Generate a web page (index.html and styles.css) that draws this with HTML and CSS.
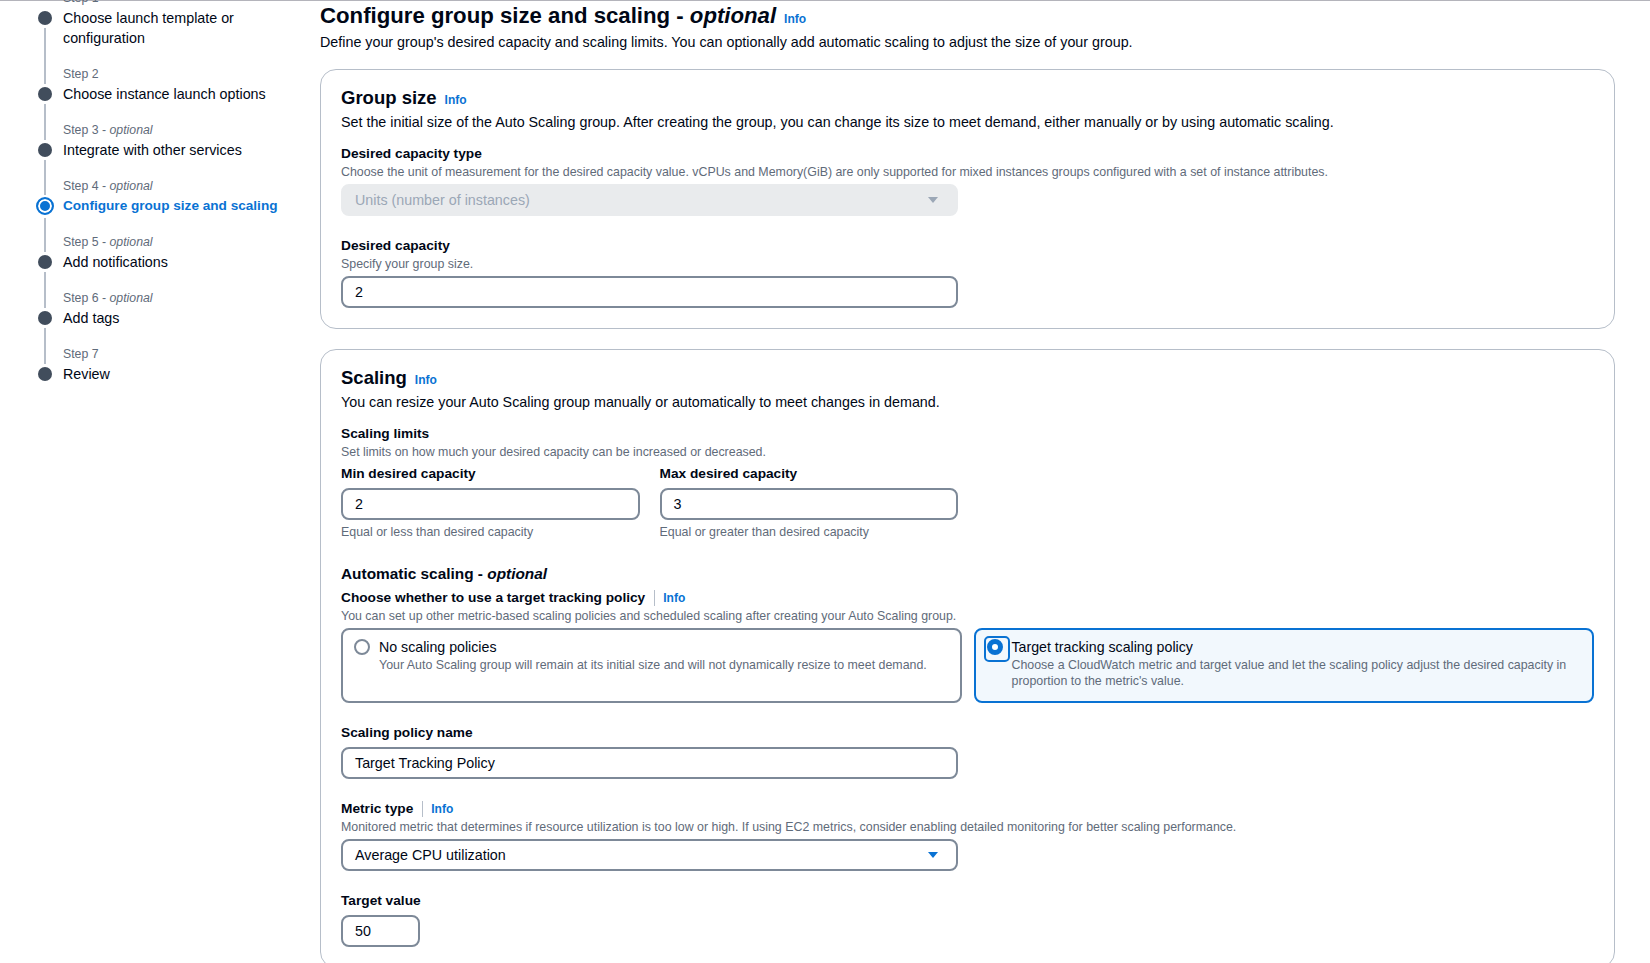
FILE: index.html
```html
<!DOCTYPE html>
<html lang="en">
<head>
<meta charset="utf-8">
<title>Configure group size and scaling</title>
<link rel="stylesheet" href="styles.css">
</head>
<body>
<div class="page">
  <nav class="wizard-nav">
    <ol class="steps">
      <li class="step first">
        <div class="rail"><span class="line top"></span><span class="dot"></span><span class="line bottom"></span></div>
        <div class="step-text"><span class="step-label">Step 1</span><span class="step-title">Choose launch template or configuration</span></div>
      </li>
      <li class="step">
        <div class="rail"><span class="line top"></span><span class="dot"></span><span class="line bottom"></span></div>
        <div class="step-text"><span class="step-label">Step 2</span><span class="step-title">Choose instance launch options</span></div>
      </li>
      <li class="step">
        <div class="rail"><span class="line top"></span><span class="dot"></span><span class="line bottom"></span></div>
        <div class="step-text"><span class="step-label">Step 3 - <i>optional</i></span><span class="step-title">Integrate with other services</span></div>
      </li>
      <li class="step active">
        <div class="rail"><span class="line top"></span><span class="dot"></span><span class="line bottom"></span></div>
        <div class="step-text"><span class="step-label">Step 4 - <i>optional</i></span><span class="step-title">Configure group size and scaling</span></div>
      </li>
      <li class="step">
        <div class="rail"><span class="line top"></span><span class="dot"></span><span class="line bottom"></span></div>
        <div class="step-text"><span class="step-label">Step 5 - <i>optional</i></span><span class="step-title">Add notifications</span></div>
      </li>
      <li class="step">
        <div class="rail"><span class="line top"></span><span class="dot"></span><span class="line bottom"></span></div>
        <div class="step-text"><span class="step-label">Step 6 - <i>optional</i></span><span class="step-title">Add tags</span></div>
      </li>
      <li class="step last">
        <div class="rail"><span class="line top"></span><span class="dot"></span><span class="line bottom"></span></div>
        <div class="step-text"><span class="step-label">Step 7</span><span class="step-title">Review</span></div>
      </li>
    </ol>
  </nav>

  <main class="content">
    <header class="page-header">
      <h1 class="page-title">Configure group size and scaling - <i>optional</i><a class="info-link">Info</a></h1>
      <p class="page-desc">Define your group's desired capacity and scaling limits. You can optionally add automatic scaling to adjust the size of your group.</p>
    </header>

    <section class="card">
      <h2 class="card-title">Group size<a class="info-link">Info</a></h2>
      <p class="card-desc">Set the initial size of the Auto Scaling group. After creating the group, you can change its size to meet demand, either manually or by using automatic scaling.</p>

      <div class="field first-field">
        <div class="field-label">Desired capacity type</div>
        <div class="field-desc">Choose the unit of measurement for the desired capacity value. vCPUs and Memory(GiB) are only supported for mixed instances groups configured with a set of instance attributes.</div>
        <div class="control select disabled">
          <span class="value">Units (number of instances)</span>
          <svg class="caret" width="16" height="16" viewBox="0 0 16 16"><path d="M3 5h10l-5 6z" fill="#9ba7b6"/></svg>
        </div>
      </div>

      <div class="field">
        <div class="field-label">Desired capacity</div>
        <div class="field-desc">Specify your group size.</div>
        <div class="control input"><span class="value">2</span></div>
      </div>
    </section>

    <section class="card">
      <h2 class="card-title">Scaling<a class="info-link">Info</a></h2>
      <p class="card-desc">You can resize your Auto Scaling group manually or automatically to meet changes in demand.</p>

      <div class="field first-field">
        <div class="field-label">Scaling limits</div>
        <div class="field-desc">Set limits on how much your desired capacity can be increased or decreased.</div>
        <div class="limits">
          <div class="limit">
            <div class="field-label">Min desired capacity</div>
            <div class="control input"><span class="value">2</span></div>
            <div class="field-help">Equal or less than desired capacity</div>
          </div>
          <div class="limit">
            <div class="field-label">Max desired capacity</div>
            <div class="control input"><span class="value">3</span></div>
            <div class="field-help">Equal or greater than desired capacity</div>
          </div>
        </div>
      </div>

      <div class="auto-scaling">
        <h3 class="section-title">Automatic scaling - <i>optional</i></h3>
        <div class="field-label label-row">Choose whether to use a target tracking policy<span class="sep"></span><a class="info-link plain">Info</a></div>
        <div class="field-desc">You can set up other metric-based scaling policies and scheduled scaling after creating your Auto Scaling group.</div>
        <div class="tiles">
          <div class="tile">
            <span class="radio"></span>
            <div class="tile-text">
              <div class="tile-title">No scaling policies</div>
              <div class="tile-desc">Your Auto Scaling group will remain at its initial size and will not dynamically resize to meet demand.</div>
            </div>
          </div>
          <div class="tile selected">
            <span class="radio checked"></span>
            <div class="tile-text">
              <div class="tile-title">Target tracking scaling policy</div>
              <div class="tile-desc">Choose a CloudWatch metric and target value and let the scaling policy adjust the desired capacity in proportion to the metric's value.</div>
            </div>
          </div>
        </div>
      </div>

      <div class="field">
        <div class="field-label">Scaling policy name</div>
        <div class="control input"><span class="value">Target Tracking Policy</span></div>
      </div>

      <div class="field">
        <div class="field-label label-row">Metric type<span class="sep"></span><a class="info-link plain">Info</a></div>
        <div class="field-desc">Monitored metric that determines if resource utilization is too low or high. If using EC2 metrics, consider enabling detailed monitoring for better scaling performance.</div>
        <div class="control select">
          <span class="value">Average CPU utilization</span>
          <svg class="caret" width="16" height="16" viewBox="0 0 16 16"><path d="M3 5h10l-5 6z" fill="#0972d3"/></svg>
        </div>
      </div>

      <div class="field">
        <div class="field-label">Target value</div>
        <div class="control input small"><span class="value">50</span></div>
      </div>
    </section>
  </main>
</div>
</body>
</html>
```

FILE: styles.css
```css
* {
  box-sizing: border-box;
}

html, body {
  margin: 0;
  padding: 0;
  background: #ffffff;
}

body {
  font-family: "Liberation Sans", Arial, sans-serif;
  font-size: 14.3px;
  line-height: 20px;
  color: #000716;
  overflow: hidden;
}

.page {
  display: flex;
  border-top: 1px solid #b4b4bb;
  min-height: 100vh;
}

/* ---------- wizard navigation ---------- */
.wizard-nav {
  width: 320px;
  flex: none;
  padding: 0 24px 0 37px;
}

.steps {
  list-style: none;
  margin: -13px 0 0;
  padding: 0;
}

.step {
  display: grid;
  grid-template-columns: 16px 1fr;
  column-gap: 10px;
}

.rail {
  display: flex;
  flex-direction: column;
  align-items: center;
}

.rail .line {
  width: 2px;
  background: #b6bec9;
}

.rail .line.top {
  height: 20px;
  flex: none;
}

.rail .line.bottom {
  flex: 1;
}

.rail .dot {
  flex: none;
  width: 14px;
  height: 14px;
  margin: 3px 0;
  border-radius: 50%;
  background: #414d5c;
}

.step.active .rail .line.top {
  height: 19px;
}

.step.active .rail .dot {
  width: 18px;
  height: 18px;
  margin: 2px 0 3px;
  border: 2px solid #0972d3;
  background: #0972d3;
  box-shadow: inset 0 0 0 2px #ffffff;
}

.step.first .rail .line.top,
.step.last .rail .line.bottom {
  visibility: hidden;
}

.step-text {
  display: flex;
  flex-direction: column;
  padding-bottom: 16px;
}

.step-label {
  font-size: 12.3px;
  line-height: 20px;
  color: #5f6b7a;
}

.step-title {
  font-size: 14.3px;
  line-height: 20px;
  color: #000716;
}

.step.active .step-title {
  color: #0972d3;
  font-weight: 700;
  font-size: 13.6px;
}

/* ---------- content ---------- */
.content {
  flex: 1;
  min-width: 0;
  padding-right: 35px;
}

.page-title {
  margin: 0;
  font-size: 22.2px;
  line-height: 30px;
  font-weight: 700;
  color: #000716;
}

.info-link {
  margin-left: 8px;
  font-size: 12px;
  line-height: 16px;
  font-weight: 700;
  color: #0972d3;
}

.info-link.plain {
  margin-left: 0;
}

.page-desc {
  margin: 1px 0 0;
  color: #000716;
}

.card {
  margin-top: 17px;
  border: 1px solid #b6bec9;
  border-radius: 16px;
  padding: 16px 20px 20px;
}

.card + .card {
  margin-top: 20px;
}

.card-title {
  margin: 0;
  font-size: 18.5px;
  line-height: 24px;
  font-weight: 700;
}

.card-desc {
  margin: 2px 0 0;
  color: #000716;
}

.field {
  margin-top: 20px;
}

.field.first-field {
  margin-top: 12px;
}

.field-label {
  font-weight: 700;
  font-size: 13.7px;
  line-height: 20px;
}

.field-desc,
.field-help {
  font-size: 12.4px;
  line-height: 16px;
  color: #5f6b7a;
}

.label-row {
  display: flex;
  align-items: center;
}

.sep {
  display: inline-block;
  width: 1px;
  height: 16px;
  background: #b6bec9;
  margin: 0 8px 0 9px;
}

.control {
  margin-top: 4px;
  max-width: 617px;
  height: 32px;
  border: 2px solid #7d8998;
  border-radius: 8px;
  padding: 0 12px;
  display: flex;
  align-items: center;
  background: #ffffff;
  color: #000716;
  font-size: 14.3px;
}

.control.select {
  justify-content: space-between;
  padding-right: 15px;
}

.control.disabled {
  background: #e9ebed;
  border-color: #e9ebed;
  color: #9ba7b6;
}

.control.small {
  width: 79px;
}

.caret {
  flex: none;
}

.limits {
  max-width: 617px;
  display: grid;
  grid-template-columns: 1fr 1fr;
  column-gap: 20px;
  margin-top: 4px;
}

.field-help {
  margin-top: 4px;
}

.auto-scaling {
  margin-top: 22px;
}

.section-title {
  margin: 0 0 2px;
  font-size: 15.4px;
  line-height: 24px;
  font-weight: 700;
}

.tiles {
  margin-top: 4px;
  display: grid;
  grid-template-columns: 1fr 1fr;
  column-gap: 12px;
}

.tile {
  display: flex;
  column-gap: 9px;
  border: 2px solid #7d8998;
  border-radius: 8px;
  padding: 7px 14px 12px 11px;
  background: #ffffff;
}

.tile.selected {
  border-color: #0972d3;
  background: #f2f8fd;
}

.radio {
  position: relative;
  flex: none;
  width: 16px;
  height: 16px;
  margin-top: 2px;
  border-radius: 50%;
  border: 2px solid #7d8998;
  background: #ffffff;
}

.radio.checked {
  border: 5px solid #0972d3;
}

.radio.checked::after {
  content: "";
  position: absolute;
  left: -8px;
  top: -8px;
  width: 22px;
  height: 22px;
  border: 2px solid #0972d3;
  border-radius: 5px;
}

.tile-title {
  font-size: 14.2px;
  line-height: 20px;
}

.tile-desc {
  font-size: 12.4px;
  line-height: 16px;
  color: #5f6b7a;
}
```
